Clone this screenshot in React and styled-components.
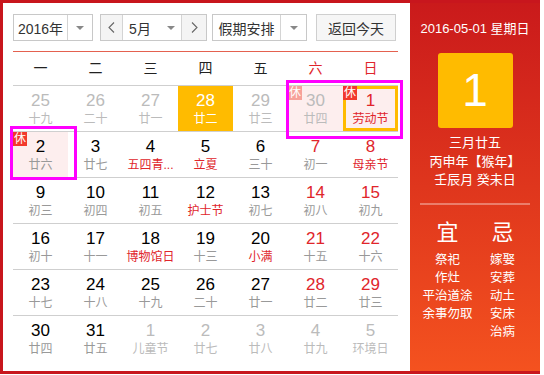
import React from 'react'
import styled, {createGlobalStyle} from 'styled-components'

const RED = '#e0252b'

const rows = [
  [
    {d: 25, l: '十九', o: 1}, {d: 26, l: '二十', o: 1}, {d: 27, l: '廿一', o: 1},
    {d: 28, l: '廿二', o: 1, today: 1}, {d: 29, l: '廿三', o: 1},
    {d: 30, l: '廿四', o: 1, rest: 1}, {d: 1, l: '劳动节', f: 1, rest: 1, sel: 1},
  ],
  [
    {d: 2, l: '廿六', rest: 1}, {d: 3, l: '廿七'}, {d: 4, l: '五四青...', f: 1},
    {d: 5, l: '立夏', f: 1}, {d: 6, l: '三十'}, {d: 7, l: '初一'}, {d: 8, l: '母亲节', f: 1},
  ],
  [
    {d: 9, l: '初三'}, {d: 10, l: '初四'}, {d: 11, l: '初五'}, {d: 12, l: '护士节', f: 1},
    {d: 13, l: '初七'}, {d: 14, l: '初八'}, {d: 15, l: '初九'},
  ],
  [
    {d: 16, l: '初十'}, {d: 17, l: '十一'}, {d: 18, l: '博物馆日', f: 1}, {d: 19, l: '十三'},
    {d: 20, l: '小满', f: 1}, {d: 21, l: '十五'}, {d: 22, l: '十六'},
  ],
  [
    {d: 23, l: '十七'}, {d: 24, l: '十八'}, {d: 25, l: '十九'}, {d: 26, l: '二十'},
    {d: 27, l: '廿一'}, {d: 28, l: '廿二'}, {d: 29, l: '廿三'},
  ],
  [
    {d: 30, l: '廿四'}, {d: 31, l: '廿五'}, {d: 1, l: '儿童节', o: 1}, {d: 2, l: '廿七', o: 1},
    {d: 3, l: '廿八', o: 1}, {d: 4, l: '廿九', o: 1}, {d: 5, l: '环境日', o: 1},
  ],
]

const weekdays = ['一', '二', '三', '四', '五', '六', '日']

function numColor(c, col) {
  if (c.today) return '#fff'
  if (c.o) return '#bbb'
  if (col >= 5) return RED
  return '#000'
}

function lunarColor(c) {
  if (c.today) return '#fff'
  if (c.o) return '#bbb'
  if (c.f) return RED
  return '#999'
}

function Chevron({left}) {
  return (
    <svg width="7" height="11" viewBox="0 0 7 11">
      <polyline
        points={left ? '6,0.5 1,5.5 6,10.5' : '1,0.5 6,5.5 1,10.5'}
        fill="none" stroke="#666" strokeWidth="1.1"
      />
    </svg>
  )
}

function App() {
  return (
    <>
      <GlobalStyle />
      <Wrap>
        <Main>
          <Toolbar>
            <Select $w={80}>
              <SelText>2016年</SelText>
              <ArrowBox $w={24}><Caret /></ArrowBox>
            </Select>
            <Select $w={107} $ml={7}>
              <NavBtn $side="left"><Chevron left /></NavBtn>
              <SelText>
                <span>5月</span>
                <Caret $ml={16} />
              </SelText>
              <NavBtn $side="right"><Chevron /></NavBtn>
            </Select>
            <Select $w={95} $ml={5}>
              <SelText>假期安排</SelText>
              <ArrowBox $w={25}><Caret /></ArrowBox>
            </Select>
            <TodayBtn>返回今天</TodayBtn>
          </Toolbar>

          <Grid>
            {weekdays.map((w, i) => (
              <WeekHead key={w} $red={i >= 5}>{w}</WeekHead>
            ))}
            {rows.map((row, r) =>
              row.map((c, i) => (
                <Cell
                  key={r + '-' + i}
                  $today={c.today}
                  $rest={c.rest}
                  $sel={c.sel}
                  $last={r === rows.length - 1}
                >
                  {c.rest && <Badge $faded={c.o}>休</Badge>}
                  <Num $color={numColor(c, i)}>{c.d}</Num>
                  <Lunar $color={lunarColor(c)}>{c.l}</Lunar>
                </Cell>
              ))
            )}
          </Grid>
        </Main>

        <Panel>
          <DateLine>2016-05-01 星期日</DateLine>
          <BigDay>1</BigDay>
          <Info>
            <div>三月廿五</div>
            <div>丙申年【猴年】</div>
            <div>壬辰月 癸未日</div>
          </Info>
          <Divider />
          <Almanac>
            <AlmCol>
              <AlmHead>宜</AlmHead>
              <div>祭祀</div>
              <div>作灶</div>
              <div>平治道涂</div>
              <div>余事勿取</div>
            </AlmCol>
            <AlmCol>
              <AlmHead>忌</AlmHead>
              <div>嫁娶</div>
              <div>安葬</div>
              <div>动土</div>
              <div>安床</div>
              <div>治病</div>
            </AlmCol>
          </Almanac>
        </Panel>

        <Mark style={{left: 283, top: 77, width: 117, height: 59}} />
        <Mark style={{left: 7, top: 123, width: 67, height: 54}} />
      </Wrap>
    </>
  )
}

export default App

const GlobalStyle = createGlobalStyle`
  body{
    margin: 0;
    background: #fff;
    font-family: "Liberation Sans", "Noto Sans CJK SC", sans-serif;
  }
`

const Wrap = styled.div`
  position: relative;
  display: flex;
  width: 540px;
  height: 374px;
  box-sizing: border-box;
  border: 3px solid #c8161d;
  border-right: none;
`

const Main = styled.div`
  flex: 1;
  padding: 11px 11px 0 10px;
`

const Toolbar = styled.div`
  display: flex;
  align-items: center;
  height: 27px;
  padding-bottom: 10px;
  border-bottom: 1px solid #e4614f;
  width: 385px;
`

const Select = styled.div`
  display: flex;
  width: ${p => p.$w}px;
  height: 27px;
  margin-left: ${p => p.$ml || 0}px;
  box-sizing: border-box;
  border: 1px solid #c8c8c8;
  background: #fff;
  font-size: 14px;
  color: #333;
`

const SelText = styled.div`
  flex: 1;
  display: flex;
  align-items: center;
  justify-content: center;
`

const ArrowBox = styled.div`
  width: ${p => p.$w}px;
  display: flex;
  align-items: center;
  justify-content: center;
  border-left: 1px solid #d4d4d4;
`

const Caret = styled.span`
  width: 0;
  height: 0;
  margin-left: ${p => p.$ml || 0}px;
  border-left: 4px solid transparent;
  border-right: 4px solid transparent;
  border-top: 4px solid #888;
`

const NavBtn = styled.div`
  width: ${p => (p.$side === 'left' ? 21 : 24)}px;
  display: flex;
  align-items: center;
  justify-content: center;
  background: #f4f4f4;
  ${p => (p.$side === 'left' ? 'border-right' : 'border-left')}: 1px solid #d4d4d4;
`

const TodayBtn = styled.div`
  margin-left: 9px;
  width: 80px;
  height: 27px;
  box-sizing: border-box;
  border: 1px solid #cfcfcf;
  background: #f6f6f6;
  display: flex;
  align-items: center;
  justify-content: center;
  font-size: 14px;
  color: #333;
`

const Grid = styled.div`
  display: grid;
  grid-template-columns: repeat(7, 55px);
`

const WeekHead = styled.div`
  height: 33px;
  line-height: 33px;
  text-align: center;
  font-size: 14px;
  color: ${p => (p.$red ? '#e0252b' : '#222')};
  border-bottom: 1px solid #cfcfcf;
`

const Cell = styled.div`
  position: relative;
  height: 45px;
  display: flex;
  flex-direction: column;
  align-items: center;
  border-bottom: ${p => (p.$last ? 'none' : '1px solid #cfcfcf')};
  background: ${p => (p.$today ? '#ffbb00' : p.$rest ? '#fdeeee' : 'transparent')};
  box-shadow: ${p => (p.$sel ? 'inset 0 0 0 3px #ffbb00' : 'none')};
`

const Badge = styled.span`
  position: absolute;
  top: 0;
  left: 0;
  width: 14px;
  height: 14px;
  line-height: 14px;
  text-align: center;
  font-size: 12px;
  color: #fff;
  background: ${p => (p.$faded ? '#f7a199' : '#f2392c')};
`

const Num = styled.div`
  margin-top: 5px;
  font-size: 17px;
  line-height: 20px;
  color: ${p => p.$color};
`

const Lunar = styled.div`
  font-size: 12px;
  line-height: 16px;
  white-space: nowrap;
  color: ${p => p.$color};
`

const Panel = styled.div`
  width: 130px;
  display: flex;
  flex-direction: column;
  align-items: center;
  padding-top: 16px;
  color: #fff;
  background: linear-gradient(to bottom, #ca1a1b, #f4521f);
`

const DateLine = styled.div`
  font-size: 13px;
  line-height: 20px;
`

const BigDay = styled.div`
  margin-top: 14px;
  width: 75px;
  height: 75px;
  border-radius: 3px;
  background: #ffbb00;
  font-size: 46px;
  line-height: 75px;
  text-align: center;
`

const Info = styled.div`
  margin-top: 6px;
  font-size: 13px;
  line-height: 18.5px;
  text-align: center;
`

const Divider = styled.div`
  margin-top: 13px;
  width: 110px;
  height: 2px;
  background: rgba(255, 255, 255, 0.35);
`

const Almanac = styled.div`
  display: flex;
  margin-top: 14px;
`

const AlmCol = styled.div`
  width: 55px;
  text-align: center;
  font-size: 12.5px;
  line-height: 18px;
`

const AlmHead = styled.div`
  font-size: 22px;
  line-height: 28px;
  margin-bottom: 4px;
`

const Mark = styled.div`
  position: absolute;
  box-sizing: border-box;
  border: 3px solid #ff00ff;
  pointer-events: none;
`
